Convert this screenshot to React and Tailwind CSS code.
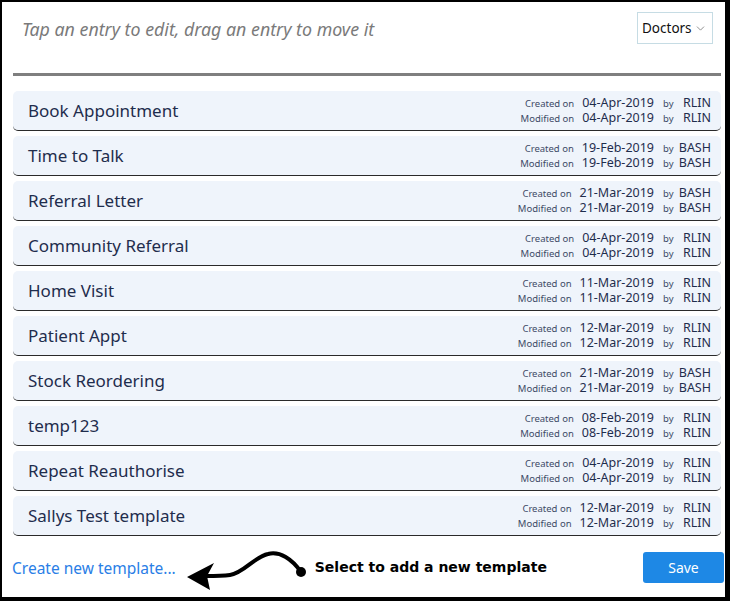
import React from 'react';
import { ChevronDown } from 'lucide-react';

const TEMPLATES = [
  { name: 'Book Appointment', created: '04-Apr-2019', createdBy: 'RLIN', modified: '04-Apr-2019', modifiedBy: 'RLIN' },
  { name: 'Time to Talk', created: '19-Feb-2019', createdBy: 'BASH', modified: '19-Feb-2019', modifiedBy: 'BASH' },
  { name: 'Referral Letter', created: '21-Mar-2019', createdBy: 'BASH', modified: '21-Mar-2019', modifiedBy: 'BASH' },
  { name: 'Community Referral', created: '04-Apr-2019', createdBy: 'RLIN', modified: '04-Apr-2019', modifiedBy: 'RLIN' },
  { name: 'Home Visit', created: '11-Mar-2019', createdBy: 'RLIN', modified: '11-Mar-2019', modifiedBy: 'RLIN' },
  { name: 'Patient Appt', created: '12-Mar-2019', createdBy: 'RLIN', modified: '12-Mar-2019', modifiedBy: 'RLIN' },
  { name: 'Stock Reordering', created: '21-Mar-2019', createdBy: 'BASH', modified: '21-Mar-2019', modifiedBy: 'BASH' },
  { name: 'temp123', created: '08-Feb-2019', createdBy: 'RLIN', modified: '08-Feb-2019', modifiedBy: 'RLIN' },
  { name: 'Repeat Reauthorise', created: '04-Apr-2019', createdBy: 'RLIN', modified: '04-Apr-2019', modifiedBy: 'RLIN' },
  { name: 'Sallys Test template', created: '12-Mar-2019', createdBy: 'RLIN', modified: '12-Mar-2019', modifiedBy: 'RLIN' },
];

function MetaLine({ label, date, user }) {
  return (
    <div className="flex items-baseline justify-end h-[15px] leading-none">
      <span className="text-[9.5px] text-[#3d4a66]">{label}</span>
      <span className="ml-[8px] mr-[9px] text-[12.5px] text-[#1f2d4d]">{date}</span>
      <span className="w-[12px] text-[9.5px] text-[#3d4a66]">by</span>
      <span className="w-[36px] text-right text-[12.5px] text-[#1f2d4d]">{user}</span>
    </div>
  );
}

function TemplateRow({ item }) {
  return (
    <div className="mt-[5px] first:mt-0 h-[40px] shrink-0 flex items-center justify-between bg-[#eff4fb] border-b border-[#2a2a2a] rounded-[5px] pl-[15px] pr-[10px]">
      <span className="text-[17px] text-[#1f2d4d]">{item.name}</span>
      <div className="flex flex-col pt-[3px]">
        <MetaLine label="Created on" date={item.created} user={item.createdBy} />
        <MetaLine label="Modified on" date={item.modified} user={item.modifiedBy} />
      </div>
    </div>
  );
}

function CurvyArrow() {
  return (
    <svg width="125" height="46" viewBox="0 0 125 46" className="shrink-0 -mt-[18px] -mb-[23px]">
      <path
        d="M117 25 C 108 12, 96 4, 84 7 C 70 10, 60 26, 46 28 C 38 29, 30 29, 22 29"
        fill="none"
        stroke="#000"
        strokeWidth="4"
        strokeLinecap="round"
      />
      <circle cx="117" cy="25" r="5" fill="#000" />
      <polygon points="3,30 30,16 23,29 26,43" fill="#000" />
    </svg>
  );
}

export default function App() {
  return (
    <div
      className="w-[730px] h-[601px] bg-white border-black border-t-2 border-l-2 border-r-[5px] border-b-4 flex flex-col overflow-hidden"
      style={{ fontFamily: '"Noto Sans", "Open Sans", sans-serif' }}
    >
      <div className="shrink-0 flex items-center justify-between pt-[10px] pl-[20px] pr-[12px]">
        <span className="italic text-[17.8px] text-[#7a7a7a] leading-none mt-[3px]">
          Tap an entry to edit, drag an entry to move it
        </span>
        <div className="h-[32px] w-[76px] flex items-center justify-between border border-[#c6dce4] pl-[4px] pr-[5px] text-[13.5px] text-[#111]">
          <span>Doctors</span>
          <ChevronDown size={13} strokeWidth={1.5} className="text-[#777]" />
        </div>
      </div>

      <div className="shrink-0 mt-[29px] ml-[11px] mr-[4px] h-[3px] bg-[#7f7f7f]" />

      <div className="shrink-0 mt-[15px] ml-[11px] mr-[4px] flex flex-col">
        {TEMPLATES.map((t) => (
          <TemplateRow key={t.name} item={t} />
        ))}
      </div>

      <div className="shrink-0 mt-[16px] h-[31px] flex items-center pl-[10px] pr-px">
        <a className="text-[15.5px] text-[#2a7ee6] cursor-pointer mt-[3px]">Create new template...</a>
        <div className="ml-[8px] h-[31px] flex items-center">
          <CurvyArrow />
          <span
            className="ml-[6px] text-[14px] font-bold text-black"
            style={{ fontFamily: '"Comic Sans MS", "DejaVu Sans", cursive' }}
          >
            Select to add a new template
          </span>
        </div>
        <button className="ml-auto h-[31px] w-[81px] bg-[#1e88e5] rounded-[3px] text-white text-[14px]">
          Save
        </button>
      </div>
    </div>
  );
}
